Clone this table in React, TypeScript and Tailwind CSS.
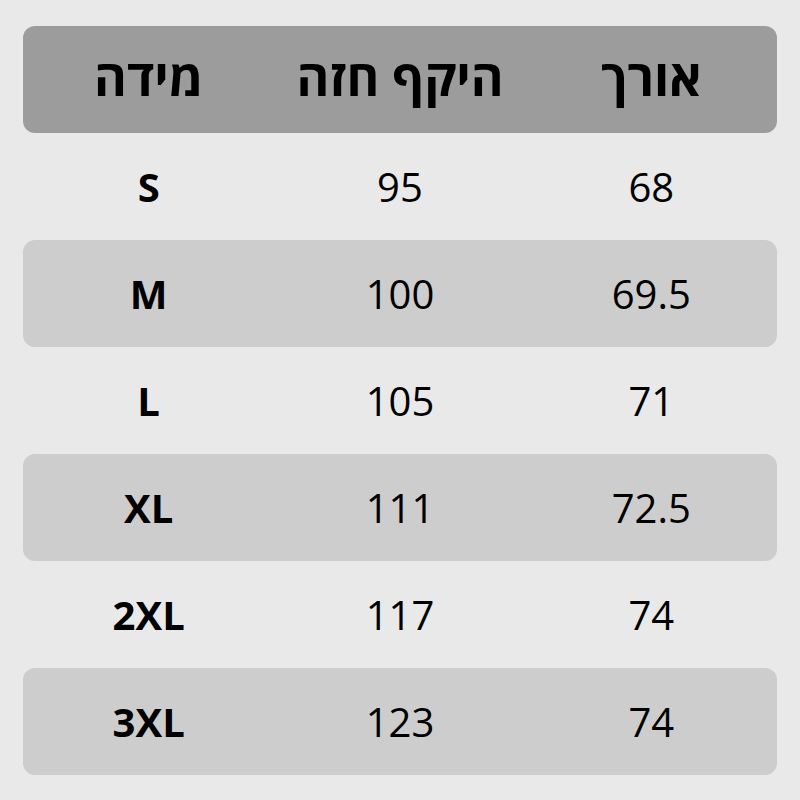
import React from 'react'

const rows = [
  { size: 'S', chest: '95', length: '68' },
  { size: 'M', chest: '100', length: '69.5' },
  { size: 'L', chest: '105', length: '71' },
  { size: 'XL', chest: '111', length: '72.5' },
  { size: '2XL', chest: '117', length: '74' },
  { size: '3XL', chest: '123', length: '74' },
]

export default function App() {
  return (
    <div
      className="w-[800px] h-[800px] bg-[#e9e9e9] px-[23px] pt-[26px] text-black"
      style={{ fontFamily: '"Open Sans", "Noto Sans", sans-serif' }}
    >
      {/* Header */}
      <div className="grid grid-cols-3 h-[107px] items-center rounded-[12px] bg-[#9c9c9c] text-[50px] font-bold leading-none">
        <div className="text-center pb-[6px]">מידה</div>
        <div className="text-center pb-[6px]">היקף חזה</div>
        <div className="text-center pb-[6px]">אורך</div>
      </div>

      {/* Rows */}
      {rows.map((r, i) => (
        <div
          key={r.size}
          className={
            'grid grid-cols-3 h-[107px] items-center rounded-[12px] text-[40px] ' +
            (i % 2 === 1 ? 'bg-[#cdcdcd]' : '')
          }
        >
          <div className="text-center font-bold">{r.size}</div>
          <div className="text-center">{r.chest}</div>
          <div className="text-center">{r.length}</div>
        </div>
      ))}
    </div>
  )
}
